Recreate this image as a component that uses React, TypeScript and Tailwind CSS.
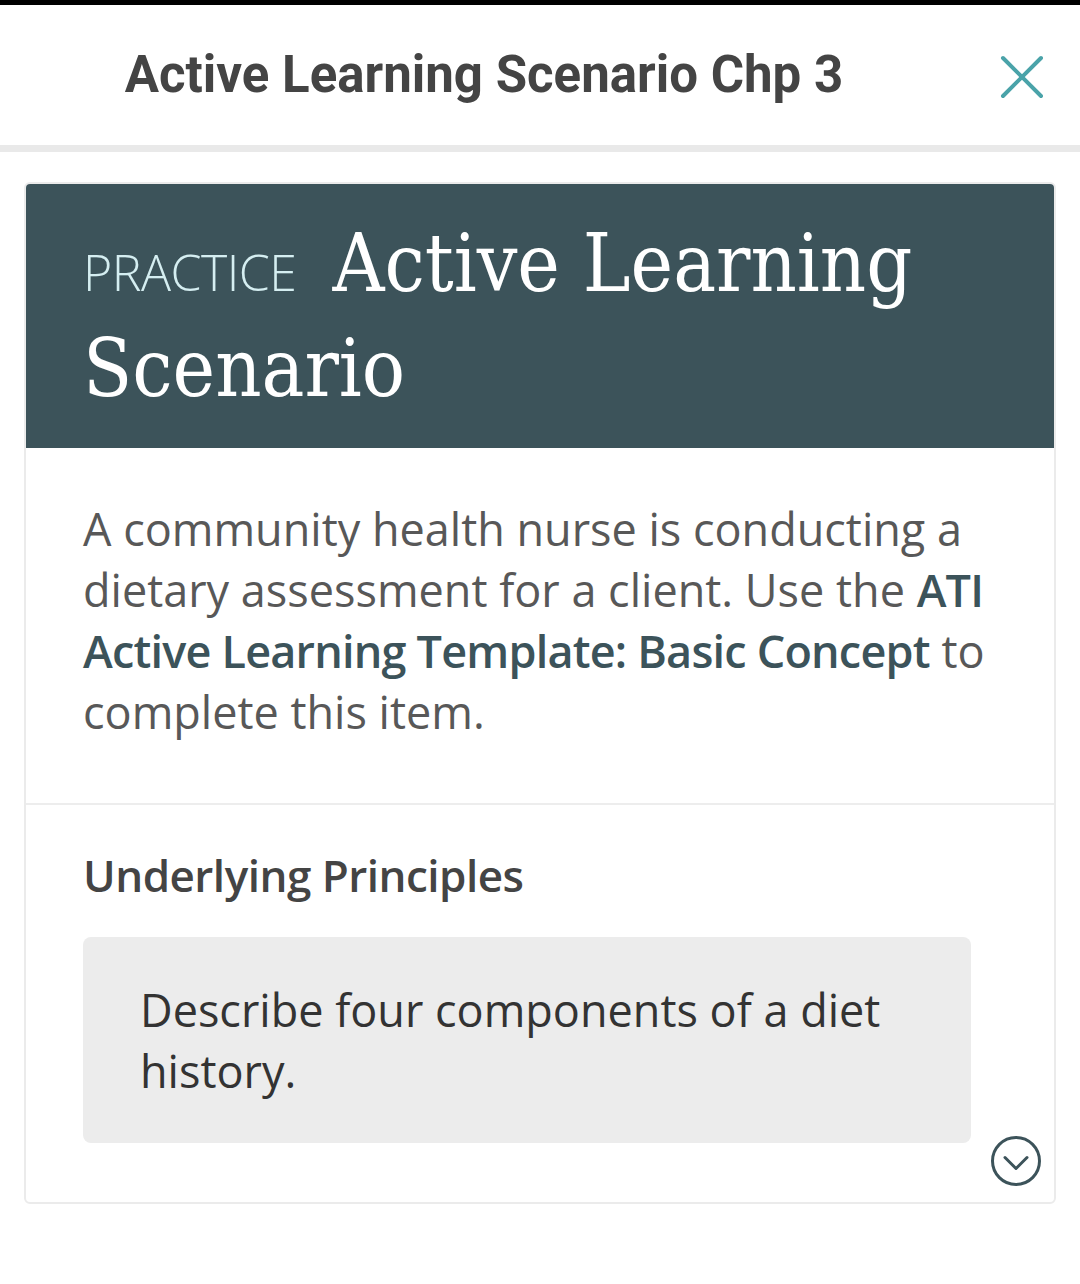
import React from "react";

export default function App() {
  return (
    <div className="w-[1080px] min-h-[1284px] bg-white">
      <div className="h-[5px] bg-black" />
      <div className="relative flex h-[140px] items-center justify-center">
        <h1
          className="pr-[112px] text-[51px] font-bold text-[#444444]"
          style={{ fontFamily: "Roboto, 'Liberation Sans', sans-serif" }}
        >
          Active Learning Scenario Chp 3
        </h1>
        <button className="absolute right-[36px] top-[50px] text-[#4aa3a9]">
          <svg width="44" height="44" viewBox="0 0 44 44" fill="none" stroke="currentColor" strokeWidth="4" strokeLinecap="round">
            <path d="M3 3 L41 41 M41 3 L3 41" />
          </svg>
        </button>
      </div>
      <div className="h-[7px] bg-[#e9e9e9]" />

      <div className="mx-[24px] mt-[30px] overflow-hidden rounded-[6px] border-2 border-[#ebebeb]">
        <div className="h-[264px] bg-[#3c535a] px-[57px] pt-[27px]">
          <p
            className="text-[80px] leading-[105px] text-white"
            style={{ fontFamily: "'DejaVu Serif Condensed', 'DejaVu Serif', serif", fontWeight: 300 }}
          >
            <span
              className="mr-[36px] align-baseline text-[50px] leading-none tracking-[-0.5px] text-[#d5eef1]"
              style={{ fontFamily: "'Open Sans', sans-serif", fontWeight: 300 }}
            >
              PRACTICE
            </span>
            Active Learning Scenario
          </p>
        </div>

        <div
          className="h-[357px] border-b-2 border-[#ededed] px-[57px] pt-[50px] text-[45px] leading-[61px] text-[#585858]"
          style={{ fontFamily: "'Open Sans', sans-serif" }}
        >
          A community health nurse is conducting a dietary assessment for a client. Use the{" "}
          <span className="font-semibold tracking-[-0.8px] text-[#3c535a]">ATI Active Learning Template: Basic Concept</span> to
          complete this item.
        </div>

        <div className="relative px-[57px] pb-[59px] pt-[40px]" style={{ fontFamily: "'Open Sans', sans-serif" }}>
          <h2 className="text-[44px] font-semibold leading-[60px] tracking-[-0.5px] text-[#444444]">
            Underlying Principles
          </h2>
          <div className="mt-[32px] w-[888px] rounded-[8px] bg-[#ececec] px-[57px] pb-[42px] pt-[42px] text-[45px] leading-[61px] text-[#333333]">
            Describe four components of a diet history.
          </div>
          <button className="absolute bottom-[15px] right-[12px] text-[#3c535a]">
            <svg width="52" height="52" viewBox="0 0 52 52" fill="none" stroke="currentColor" strokeWidth="3" strokeLinecap="round" strokeLinejoin="round">
              <circle cx="26" cy="26" r="23.5" />
              <path d="M15 22.5 L26 33.5 L37 22.5" />
            </svg>
          </button>
        </div>
      </div>
    </div>
  );
}
